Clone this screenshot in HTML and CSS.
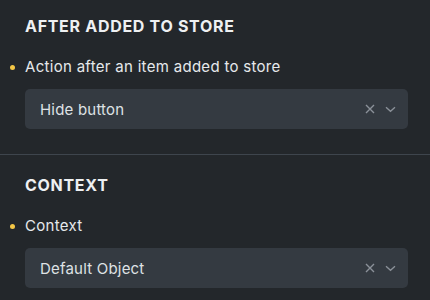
FILE: index.html
```html
<!DOCTYPE html>
<html>
<head>
<meta charset="utf-8">
<link rel="stylesheet" href="styles.css">
</head>
<body>
<div class="panel">
  <section class="section">
    <h2 class="heading">After added to store</h2>
    <div class="label"><span class="dot"></span>Action after an item added to store</div>
    <div class="select">
      <span class="value">Hide button</span>
      <span class="icons">
        <svg class="clear" width="10" height="10" viewBox="0 0 10 10"><path d="M1 1L9 9M9 1L1 9" stroke="currentColor" stroke-width="1.4" fill="none"/></svg>
        <svg class="chev" width="11" height="7" viewBox="0 0 11 7"><path d="M1 1.2L5.5 5.3L10 1.2" stroke="currentColor" stroke-width="1.3" fill="none"/></svg>
      </span>
    </div>
  </section>
  <section class="section">
    <h2 class="heading">Context</h2>
    <div class="label"><span class="dot"></span>Context</div>
    <div class="select">
      <span class="value">Default Object</span>
      <span class="icons">
        <svg class="clear" width="10" height="10" viewBox="0 0 10 10"><path d="M1 1L9 9M9 1L1 9" stroke="currentColor" stroke-width="1.4" fill="none"/></svg>
        <svg class="chev" width="11" height="7" viewBox="0 0 11 7"><path d="M1 1.2L5.5 5.3L10 1.2" stroke="currentColor" stroke-width="1.3" fill="none"/></svg>
      </span>
    </div>
  </section>
</div>
</body>
</html>
```
FILE: styles.css
```css
html, body {
  margin: 0;
  padding: 0;
  background: #23272b;
  overflow: hidden;
}
body {
  font-family: Inter, "Noto Sans", sans-serif;
  color: #e3e6e9;
}
.panel {
  margin-top: -4px;
}
.section {
  padding: 20px 22px 25px 25px;
}
.section + .section {
  border-top: 1px solid #3e454d;
  padding-top: 20px;
}
.heading {
  margin: 0;
  font-size: 16px;
  line-height: 20px;
  font-weight: 700;
  text-transform: uppercase;
  letter-spacing: 0.7px;
  color: #eef0f2;
}
.label {
  position: relative;
  margin-top: 21px;
  font-size: 15px;
  line-height: 20px;
  letter-spacing: 0.3px;
  color: #e6e9ec;
}
.dot {
  position: absolute;
  left: -15px;
  top: 8px;
  width: 5px;
  height: 5px;
  border-radius: 50%;
  background: #f3c646;
}
.select {
  margin-top: 12px;
  height: 40px;
  border-radius: 5px;
  background: #343a41;
  display: flex;
  align-items: center;
  justify-content: space-between;
  padding: 0 12px 0 15px;
  font-size: 15px;
  letter-spacing: 0.2px;
  color: #dfe2e5;
}
.icons {
  display: flex;
  align-items: center;
  gap: 10px;
  color: #8b9199;
}
.clear, .chev {
  display: block;
}
```
